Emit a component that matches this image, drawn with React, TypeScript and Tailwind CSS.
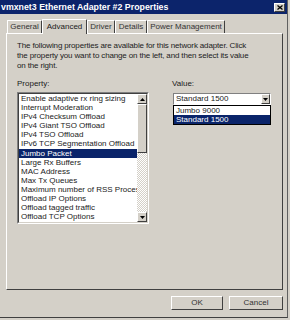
import React from "react";

const ITEMS = [
  "Enable adaptive rx ring sizing",
  "Interrupt Moderation",
  "IPv4 Checksum Offload",
  "IPv4 Giant TSO Offload",
  "IPv4 TSO Offload",
  "IPv6 TCP Segmentation Offload",
  "Jumbo Packet",
  "Large Rx Buffers",
  "MAC Address",
  "Max Tx Queues",
  "Maximum number of RSS Processors",
  "Offload IP Options",
  "Offload tagged traffic",
  "Offload TCP Options",
];

const TABS = [
  { label: "General", w: "w-[35px]" },
  { label: "Advanced", w: "w-[45px]" },
  { label: "Driver", w: "w-[28px]" },
  { label: "Details", w: "w-[32px]" },
  { label: "Power Management", w: "w-[78px]" },
];

function Arrow({ up }: { up?: boolean }) {
  return (
    <svg width="5" height="3" viewBox="0 0 5 3">
      <path d={up ? "M2.5 0 L5 3 L0 3 Z" : "M0 0 L5 0 L2.5 3 Z"} fill="#000" />
    </svg>
  );
}

function RaisedBox({ className, children }: { className?: string; children?: React.ReactNode }) {
  return (
    <div
      className={`bg-[#d4d0c8] border border-t-white border-l-white border-r-[#404040] border-b-[#404040] flex items-center justify-center ${className ?? ""}`}
    >
      {children}
    </div>
  );
}

export default function App() {
  return (
    <div
      className="w-[290px] h-[320px] bg-[#d4d0c8] overflow-hidden text-[8px] text-[#1a1a1a]"
      style={{ fontFamily: '"Liberation Sans", Arial, sans-serif' }}
    >
      <div className="w-[288px] h-[318px] border-r border-b border-r-[#606060] border-b-[#404040] flex flex-col">
        {/* title bar */}
        <div className="h-[14px] bg-[#0c246b] flex items-center justify-between pl-[1px] pr-[2px]">
          <span className="text-white font-bold text-[8.8px] leading-none">
            vmxnet3 Ethernet Adapter #2 Properties
          </span>
          <RaisedBox className="w-[11px] h-[9px]">
            <svg width="6" height="5" viewBox="0 0 6 5">
              <path d="M0.5 0.5 L5.5 4.5 M5.5 0.5 L0.5 4.5" stroke="#000" strokeWidth="1.3" />
            </svg>
          </RaisedBox>
        </div>

        {/* tabs */}
        <div className="flex items-end h-[19px] pl-[7px]">
          {TABS.map((t, i) =>
            i === 1 ? (
              <div
                key={t.label}
                className={`${t.w} h-[15px] -mb-[1px] z-10 bg-[#d4d0c8] border-l border-t border-r border-l-white border-t-white border-r-[#404040] rounded-t-[1px] flex items-center justify-center leading-none text-[8px]`}
              >
                {t.label}
              </div>
            ) : (
              <div
                key={t.label}
                className={`${t.w} h-[13px] border-l border-t border-r border-l-white border-t-white border-r-[#404040] rounded-t-[1px] flex items-center justify-center leading-none text-[#333] text-[8px]`}
              >
                {t.label}
              </div>
            )
          )}
        </div>

        {/* panel */}
        <div className="ml-[6px] w-[277px] h-[257px] border border-t-white border-l-white border-r-[#404040] border-b-[#404040] flex flex-col pl-[10px] pt-[7px]">
          <p className="leading-[10px] text-[8px] text-[#222] tracking-[-0.15px]">
            The following properties are available for this network adapter. Click
            <br />
            the property you want to change on the left, and then select its value
            <br />
            on the right.
          </p>

          <div className="flex mt-[8px]">
            <div className="flex flex-col">
              <span className="leading-[10px] h-[10px]">Property:</span>
              <div className="mt-[3px] w-[132px] h-[132px] bg-white border border-t-[#808080] border-l-[#808080] border-r-white border-b-white flex">
                <div className="flex-1 border border-t-[#404040] border-l-[#404040] border-r-[#d4d0c8] border-b-[#d4d0c8] flex overflow-hidden">
                  <div className="flex-1 flex flex-col overflow-hidden">
                    {ITEMS.map((it) => (
                      <div
                        key={it}
                        className={`h-[9.1px] leading-[9.1px] pl-[2px] whitespace-nowrap text-[8px] ${
                          it === "Jumbo Packet" ? "bg-[#0a246a] text-white" : "text-[#222]"
                        }`}
                      >
                        {it}
                      </div>
                    ))}
                  </div>
                  <div className="w-[10px] flex flex-col bg-[repeating-conic-gradient(#ffffff_0_25%,#d4d0c8_0_50%)] bg-[length:2px_2px]">
                    <RaisedBox className="h-[10px]">
                      <Arrow up />
                    </RaisedBox>
                    <RaisedBox className="h-[49px]" />
                    <div className="flex-1" />
                    <RaisedBox className="h-[10px]">
                      <Arrow />
                    </RaisedBox>
                  </div>
                </div>
              </div>
            </div>

            <div className="flex flex-col ml-[23px]">
              <span className="leading-[10px] h-[10px]">Value:</span>
              <div className="relative mt-[4px] ml-[1px]">
                <div className="w-[98px] h-[12px] bg-white border border-t-[#808080] border-l-[#808080] border-r-white border-b-white flex">
                  <span className="flex-1 leading-[10px] pl-[2px] text-[8px]">Standard 1500</span>
                  <RaisedBox className="w-[9px] h-[10px]">
                    <Arrow />
                  </RaisedBox>
                </div>
                <div className="absolute left-0 top-[12px] w-[98px] h-[20px] bg-white border border-black flex flex-col">
                  <div className="h-[9px] leading-[9px] pl-[2px] text-[8px]">Jumbo 9000</div>
                  <div className="h-[9px] leading-[9px] pl-[2px] text-[8px] bg-[#0a246a] text-white">
                    Standard 1500
                  </div>
                </div>
              </div>
            </div>
          </div>
        </div>

        {/* buttons */}
        <div className="flex justify-end gap-[6px] mt-[6px] pr-[4px]">
          <button className="w-[52px] h-[14px] bg-[#d4d0c8] border border-t-white border-l-white border-r-[#404040] border-b-[#404040] text-[8px] leading-none text-[#333]">
            OK
          </button>
          <button className="w-[54px] h-[14px] bg-[#d4d0c8] border border-t-white border-l-white border-r-[#404040] border-b-[#404040] text-[8px] leading-none text-[#333]">
            Cancel
          </button>
        </div>
      </div>
    </div>
  );
}
